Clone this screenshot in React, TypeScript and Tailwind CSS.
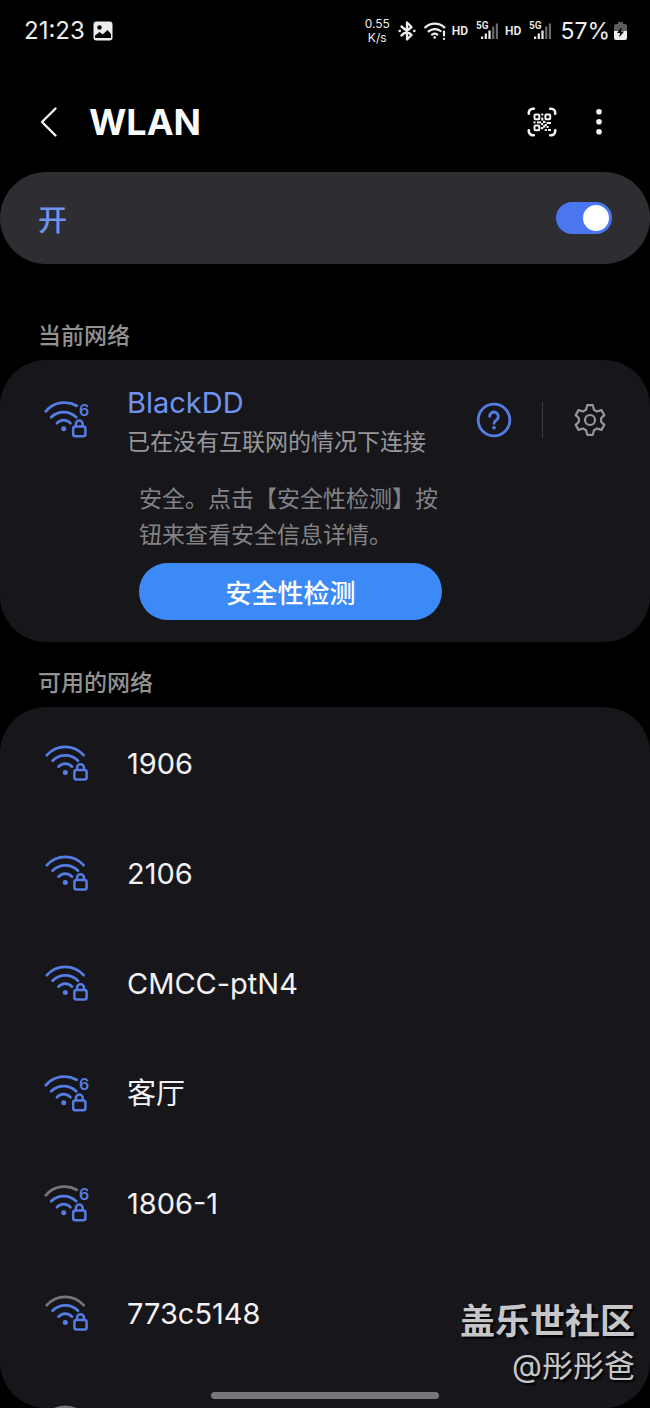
import React, { useState } from 'react';

type Strength = 'full' | 'medium';

interface Network {
  name: string;
  wifi6?: boolean;
  strength: Strength;
}

const networks: Network[] = [
  { name: '1906', strength: 'full' },
  { name: '2106', strength: 'full' },
  { name: 'CMCC-ptN4', strength: 'full' },
  { name: '客厅', wifi6: true, strength: 'full' },
  { name: '1806-1', wifi6: true, strength: 'medium' },
  { name: '773c5148', strength: 'medium' },
  { name: '', strength: 'medium' },
];

const WifiLockIcon: React.FC<{ wifi6?: boolean; strength: Strength }> = ({ wifi6, strength }) => {
  const outer = strength === 'full' ? '#557de4' : '#77757a';
  return (
    <svg
      className="h-10 w-[46px] shrink-0"
      viewBox="0 0 46 40"
      fill="none"
      stroke="#557de4"
      strokeWidth="2.8"
      strokeLinecap="round"
      aria-hidden="true"
    >
      {wifi6 ? (
        <>
          <path d="M1.8 11.3A24.5 24.5 0 0 1 32.6 5.8" stroke={outer} />
          <path d="M7.2 17.2A17.8 17.8 0 0 1 32.2 17.2" />
          <path d="M13 23.2A8.9 8.9 0 0 1 26.4 23.2" />
          <circle cx="19.7" cy="28.8" r="2.5" fill="#557de4" stroke="none" />
          <rect x="29.2" y="26.4" width="12.2" height="9.8" rx="2" strokeWidth="2.5" />
          <path d="M31.9 26v-2a3.4 3.4 0 0 1 6.8 0V26" strokeWidth="2.5" />
          <text
            x="35"
            y="16"
            fill="#557de4"
            stroke="none"
            className="font-['Inter',sans-serif] text-base font-semibold"
          >
            6
          </text>
        </>
      ) : (
        <>
          <path d="M2.8 11.2A24.5 24.5 0 0 1 39.6 11.2" stroke={outer} />
          <path d="M8.6 16.8A17.8 17.8 0 0 1 34 16.8" />
          <path d="M14.6 22.6A8.9 8.9 0 0 1 28 22.6" />
          <circle cx="21.3" cy="28.4" r="2.5" fill="#557de4" stroke="none" />
          <rect x="30.4" y="26" width="12.2" height="9.6" rx="2" strokeWidth="2.5" />
          <path d="M33.1 25.6v-2a3.4 3.4 0 0 1 6.8 0v2" strokeWidth="2.5" />
        </>
      )}
    </svg>
  );
};

const MobileSignal: React.FC = () => (
  <svg className="h-6 w-[23px]" viewBox="0 0 23 24" fill="#ededed" aria-hidden="true">
    <text x="0" y="10" className="font-['Roboto',sans-serif] text-[10px] font-semibold">5G</text>
    <rect x="5" y="17.5" width="2.2" height="2.5" />
    <rect x="8.7" y="14.5" width="2.2" height="5.5" />
    <rect x="12.4" y="11.5" width="2.2" height="8.5" />
    <rect x="16.1" y="7.5" width="2.2" height="12.5" fill="#6a6a6a" />
    <rect x="19.8" y="4.5" width="2.2" height="15.5" fill="#6a6a6a" />
  </svg>
);

const StatusBar: React.FC = () => (
  <div className="flex h-[62px] shrink-0 items-center justify-between pl-6 pr-[23px] text-[#ededed]">
    <div className="flex items-center gap-2">
      <span className="text-2xl">21:23</span>
      <svg className="h-5 w-5" viewBox="0 0 20 20" aria-hidden="true">
        <rect x="0.5" y="0.5" width="19" height="19" rx="3" fill="#ededed" />
        <circle cx="6.5" cy="6.5" r="2.2" fill="#000" />
        <path d="M2 17v-2.5l4.5-3.5 3.2 2.6L14.5 9l3.5 4v4z" fill="#000" />
      </svg>
    </div>
    <div className="flex items-center">
      <div className="mr-2 text-center text-xs leading-[14px]">
        <div>0.55</div>
        <div>K/s</div>
      </div>
      <svg
        className="mr-2 h-5 w-[18px]"
        viewBox="0 0 18 20"
        fill="none"
        stroke="#ededed"
        strokeWidth="2.3"
        strokeLinecap="round"
        strokeLinejoin="round"
        aria-hidden="true"
      >
        <path d="M3.5 5.5L13.5 14 9 18.5V1.5L13.5 6 3.5 14.5" />
        <path d="M1.5 10h.4M16.1 10h.4" />
      </svg>
      <svg
        className="mr-1.5 h-5 w-[22px]"
        viewBox="0 0 22 20"
        fill="none"
        stroke="#ededed"
        strokeWidth="2.2"
        strokeLinecap="round"
        aria-hidden="true"
      >
        <path d="M1.3 6.4A14 14 0 0 1 20.3 6.4" />
        <path d="M4.6 10.4A9.4 9.4 0 0 1 16.6 10" />
        <path d="M8 13.6A4.4 4.4 0 0 1 13.4 13.6" />
        <circle cx="10.7" cy="16.4" r="1.3" fill="#ededed" stroke="none" />
        <path d="M20 10.5v4M20 17.8v.2" />
      </svg>
      <span className="mr-2 font-['Roboto'] text-xs font-semibold">HD</span>
      <MobileSignal />
      <span className="ml-1.5 mr-2 font-['Roboto'] text-xs font-semibold">HD</span>
      <MobileSignal />
      <span className="ml-2 text-[23px]">57%</span>
      <svg className="ml-1 h-5 w-[13px]" viewBox="0 0 13 20" aria-hidden="true">
        <path d="M4 1h5v2h2a2 2 0 0 1 2 2v5H0V5a2 2 0 0 1 2-2h2z" fill="#5c5c5c" />
        <path d="M0 10h13v7a2 2 0 0 1-2 2H2a2 2 0 0 1-2-2z" fill="#ededed" />
        <path d="M7.6 6L3 12h3l-.8 4.5L10 10.4H7z" fill="#000" />
      </svg>
    </div>
  </div>
);

const QrScanIcon: React.FC = () => (
  <svg
    className="h-[30px] w-[30px]"
    viewBox="0 0 30 30"
    fill="none"
    stroke="#f5f5f5"
    strokeWidth="2.6"
    strokeLinecap="round"
    aria-hidden="true"
  >
    <path d="M1.8 6.8V5.8a4 4 0 0 1 4-4H6.8M23.2 1.8h1a4 4 0 0 1 4 4v1M28.2 23.2v1a4 4 0 0 1-4 4h-1M6.8 28.2h-1a4 4 0 0 1-4-4v-1" />
    <g strokeWidth="2">
      <rect x="7.5" y="7.5" width="4.8" height="4.8" rx="1" />
      <rect x="18.4" y="7.5" width="4.8" height="4.8" rx="1" />
      <rect x="7.5" y="18.4" width="4.8" height="4.8" rx="1" />
    </g>
    <g fill="#f5f5f5" stroke="none">
      <rect x="14.3" y="6.5" width="2" height="2" />
      <rect x="14.3" y="10.5" width="2" height="3" />
      <rect x="6.5" y="14.4" width="2" height="2" />
      <rect x="10" y="14.4" width="4" height="2" />
      <rect x="14" y="16" width="2.2" height="2.2" />
      <rect x="16" y="13.8" width="2.4" height="2.2" />
      <rect x="19.6" y="15" width="4.4" height="2" />
      <rect x="17.6" y="17" width="2.2" height="2.2" />
      <rect x="14" y="20" width="2.2" height="2.2" />
      <rect x="16" y="18.4" width="2.4" height="2.2" />
      <rect x="19.6" y="19" width="2" height="2" />
      <rect x="17.8" y="22" width="2" height="2" />
      <rect x="21" y="22" width="3" height="2" />
    </g>
  </svg>
);

const Header: React.FC = () => (
  <header className="flex h-[110px] shrink-0 items-center pl-[38px] pr-[43px] pt-2.5">
    <button type="button" aria-label="返回">
      <svg
        className="h-8 w-[22px]"
        viewBox="0 0 22 32"
        fill="none"
        stroke="#f5f5f5"
        strokeWidth="2.4"
        strokeLinecap="round"
        strokeLinejoin="round"
      >
        <path d="M17.5 2.5L4 16l13.5 13.5" />
      </svg>
    </button>
    <h1 className="ml-[29px] flex-1 text-4xl font-bold leading-[48px] text-[#fafafa]">WLAN</h1>
    <button type="button" aria-label="扫描二维码">
      <QrScanIcon />
    </button>
    <button type="button" aria-label="更多选项" className="ml-[34px]">
      <svg className="h-[30px] w-4" viewBox="0 0 16 30" fill="#f5f5f5">
        <circle cx="8" cy="4.8" r="2.8" />
        <circle cx="8" cy="14.8" r="2.8" />
        <circle cx="8" cy="24.8" r="2.8" />
      </svg>
    </button>
  </header>
);

const CurrentNetwork: React.FC = () => (
  <section className="flex shrink-0 items-start rounded-[46px] bg-[#17171b] pb-[22px] pl-11 pr-11 pt-6">
    <div className="pt-4">
      <WifiLockIcon wifi6 strength="full" />
    </div>
    <div className="ml-[37px] min-w-0 flex-1">
      <div className="flex items-start justify-between">
        <div>
          <div className="text-[29px] leading-[38px] text-[#7093ee]">BlackDD</div>
          <div className="whitespace-nowrap text-[23px] leading-10 text-[#97979b]">
            已在没有互联网的情况下连接
          </div>
        </div>
        <div className="flex items-center pt-[18px]">
          <button type="button" aria-label="帮助">
            <svg className="h-9 w-9" viewBox="0 0 36 36" fill="none" stroke="#557de4" strokeWidth="2.8" strokeLinecap="round">
              <circle cx="18" cy="18" r="15.8" />
              <path d="M13.7 14.4a4.3 4.3 0 1 1 6.9 3.4c-1.7 1.2-2.6 1.9-2.6 3.6" strokeLinejoin="round" />
              <circle cx="18" cy="25.8" r="1.8" fill="#557de4" stroke="none" />
            </svg>
          </button>
          <div className="ml-[30px] h-9 w-px bg-[#3f3f43]" />
          <button type="button" aria-label="网络设置" className="ml-[31px]">
            <svg className="h-8 w-8" viewBox="0 0 32 32" fill="none" stroke="#96969a" strokeWidth="2.2" strokeLinejoin="round">
              <path d="M13.2 1.2h5.6l1.2 4.6 3 1.7 4.5-1.4 2.8 5-3.2 3.2v3.4l3.2 3.2-2.8 5-4.5-1.4-3 1.7-1.2 4.6h-5.6L12 26.2l-3-1.7-4.5 1.4-2.8-5 3.2-3.2v-3.4l-3.2-3.2 2.8-5L9 7.5l3-1.7z" />
              <circle cx="16" cy="16" r="5" />
            </svg>
          </button>
        </div>
      </div>
      <div className="ml-3 mt-[19px] w-[303px]">
        <p className="text-[23px] leading-9 text-[#838387]">
          安全。点击【安全性检测】按钮来查看安全信息详情。
        </p>
        <button
          type="button"
          className="mt-2.5 h-[57px] w-full rounded-full bg-[#3c8af7] pt-1 text-[26px] font-medium text-white"
        >
          安全性检测
        </button>
      </div>
    </div>
  </section>
);

const App: React.FC = () => {
  const [enabled, setEnabled] = useState<boolean>(true);

  return (
    <div className="relative flex h-screen flex-col overflow-hidden bg-black font-['Inter','Noto_Sans_CJK_SC',sans-serif]">
      <StatusBar />
      <Header />

      <label className="flex h-[92px] shrink-0 items-center justify-between rounded-full bg-[#2e2d32] px-[38px]">
        <span className="pt-1.5 text-[29px] font-medium text-[#7093ee]">开</span>
        <input
          type="checkbox"
          role="switch"
          checked={enabled}
          onChange={(e) => setEnabled(e.target.checked)}
          className="h-8 w-14 appearance-none rounded-full bg-[#55555a] p-[3px] before:block before:h-[26px] before:w-[26px] before:rounded-full before:bg-white checked:bg-[#4a77f0] checked:before:ml-auto"
        />
      </label>

      <h2 className="flex h-24 shrink-0 items-end pb-2 pl-[38px] text-[23px] font-medium leading-8 text-[#929292]">
        当前网络
      </h2>
      <CurrentNetwork />

      <h2 className="flex h-[65px] shrink-0 items-end pb-2 pl-[38px] text-[23px] font-medium leading-8 text-[#929292]">
        可用的网络
      </h2>
      <ul className="min-h-0 flex-1 overflow-hidden rounded-[46px] bg-[#17171b] pt-0.5">
        {networks.map((network, index) => (
          <li key={index}>
            <button type="button" className="flex h-[110px] w-full items-center pl-11 text-left">
              <WifiLockIcon wifi6={network.wifi6} strength={network.strength} />
              <span className="ml-[37px] text-[29px] leading-10 text-[#f2f2f4]">{network.name}</span>
            </button>
          </li>
        ))}
      </ul>

      <div className="absolute bottom-[9px] left-1/2 h-[7px] w-[228px] -translate-x-1/2 rounded-full bg-[#77767b]" />
      <div className="absolute bottom-5 right-[15px] text-right text-[#c6c6c8] [text-shadow:2px_2px_2px_#000]">
        <div className="text-[35px] font-bold leading-[46px]">盖乐世社区</div>
        <div className="text-[31px] leading-[44px]">@彤彤爸</div>
      </div>
    </div>
  );
};

export default App;
